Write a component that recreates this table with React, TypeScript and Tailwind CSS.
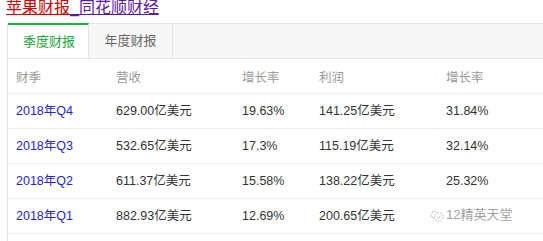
import type { ReactNode } from "react";

type Row = {
  season: string;
  revenue: string;
  revenueGrowth: string;
  profit: string;
  profitGrowth: string;
};

const rows: Row[] = [
  { season: "2018年Q4", revenue: "629.00亿美元", revenueGrowth: "19.63%", profit: "141.25亿美元", profitGrowth: "31.84%" },
  { season: "2018年Q3", revenue: "532.65亿美元", revenueGrowth: "17.3%", profit: "115.19亿美元", profitGrowth: "32.14%" },
  { season: "2018年Q2", revenue: "611.37亿美元", revenueGrowth: "15.58%", profit: "138.22亿美元", profitGrowth: "25.32%" },
  { season: "2018年Q1", revenue: "882.93亿美元", revenueGrowth: "12.69%", profit: "200.65亿美元", profitGrowth: "" },
];

const font = "font-['Liberation_Sans','Noto_Sans_CJK_SC',sans-serif]";

function Cells({ children }: { children: ReactNode[] }) {
  const widths = ["w-[100px]", "w-[126px]", "w-[77px]", "w-[127px]", "flex-1"];
  return (
    <>
      {children.map((child, i) => (
        <div key={i} className={`${widths[i]} shrink-0 whitespace-nowrap`}>
          {child}
        </div>
      ))}
    </>
  );
}

function Watermark() {
  return (
    <div className="absolute left-[429px] top-[207px] flex items-center gap-[1px] text-[13px] leading-[16px] text-[#a0a0a0] [text-shadow:0_0_2px_#fff,0_0_2px_#fff]">
      <svg viewBox="0 0 16 16" className="h-[15px] w-[16px]" fill="none" stroke="#b5b5b5" strokeWidth="1">
        <path d="M2 5.5c1.2-1.6 3-2.2 4.6-1.4" />
        <path d="M1.5 7.5c.6 1.8 2 3 3.6 3.3" />
        <circle cx="10" cy="9.5" r="4.6" strokeDasharray="2 1.2" />
        <path d="M8.2 9.6l1.4 1.3 2.3-2.6" />
      </svg>
      <span>12精英天堂</span>
    </div>
  );
}

export default function App() {
  return (
    <div className={`relative h-[241px] w-[543px] overflow-hidden bg-white ${font}`}>
      <div className="mb-[7px] pl-[6px] text-[16px] leading-[16px]">
        <a href="#" className="text-[#cc0000] underline decoration-[#cc0000]">
          苹果财报
        </a>
        <a href="#" className="text-[#5c1a9c] underline decoration-[#5c1a9c]">
          _同花顺财经
        </a>
      </div>

      <div className="ml-[7px] h-[250px] border-l border-[#e5e5e5]">
        <div className="flex h-[36px] border-b border-t border-[#e4e4e4] bg-[#f7f7f7] text-[13px]">
          <div className="-mt-px flex w-[81px] items-center justify-center border-r border-t-[2px] border-r-[#e4e4e4] border-t-[#18b93a] bg-white pl-[2px] text-[#19a83a]">
            季度财报
          </div>
          <div className="flex w-[84px] items-center justify-center border-r border-[#e4e4e4] text-[#666]">
            年度财报
          </div>
        </div>

        <div className="flex h-[35px] items-center border-b border-[#eeeeee] pl-[8px] pt-[4px] text-[12.5px] text-[#999]">
          <Cells>{["财季", "营收", "增长率", "利润", "增长率"]}</Cells>
        </div>

        {rows.map((row) => (
          <div key={row.season} className="flex h-[35px] items-center border-b border-[#eeeeee] pl-[8px] pt-[1px] text-[12.5px] text-[#333]">
            <Cells>
              {[
                <span key="s" className="text-[#2424d6]">{row.season}</span>,
                row.revenue,
                row.revenueGrowth,
                row.profit,
                row.profitGrowth,
              ]}
            </Cells>
          </div>
        ))}
      </div>

      <Watermark />
    </div>
  );
}
